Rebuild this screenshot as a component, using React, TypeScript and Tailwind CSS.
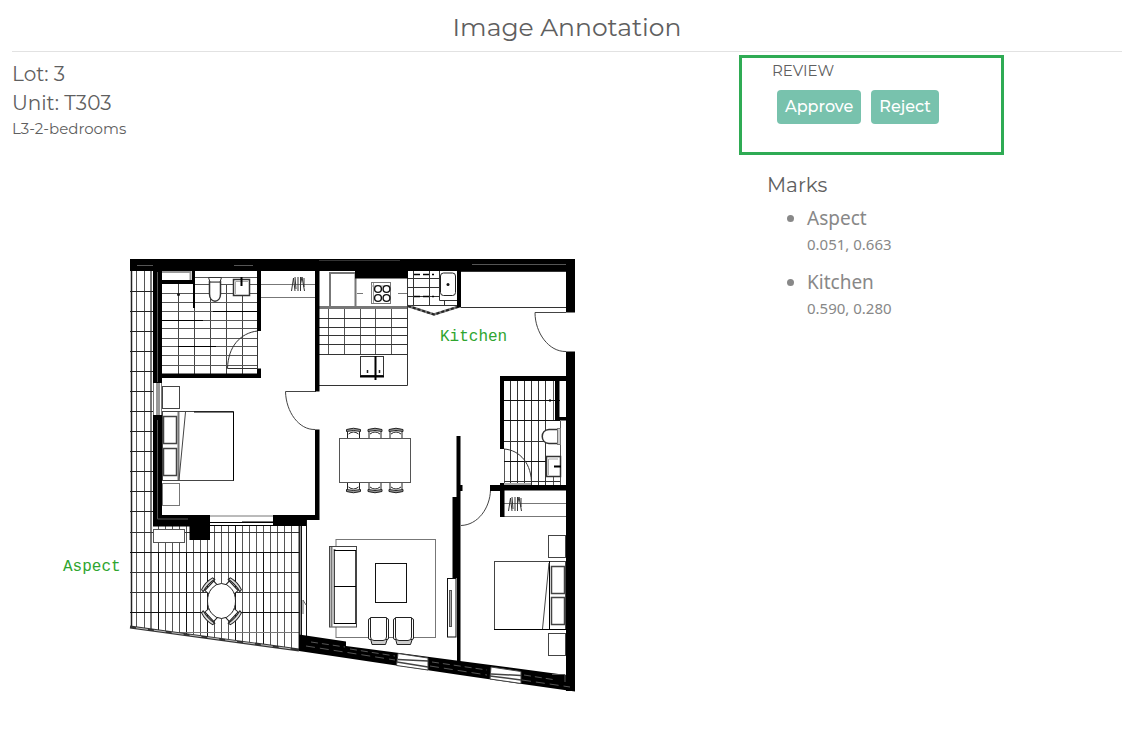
import React from "react";

type Mark = { name: string; at: string; x: number; y: number };

const marks: Mark[] = [
  { name: "Aspect", at: "0.051, 0.663", x: 63, y: 571 },
  { name: "Kitchen", at: "0.590, 0.280", x: 440, y: 341 },
];

const vertical = (xs: number[], top: number, bottom: number) =>
  xs.map((x) => `M${x} ${top}V${bottom}`).join("");
const horizontal = (ys: number[], left: number, right: number) =>
  ys.map((y) => `M${left} ${y}H${right}`).join("");

const deckEdge = (x: number) => 626 + ((x - 130) * 23) / 168;
const deckColumns = Array.from({ length: 20 }, (_, i) => 158.5 + i * 7);

function Chair({ x, y, turn }: { x: number; y: number; turn: number }) {
  return (
    <g transform={`translate(${x} ${y}) rotate(${turn})`} stroke="#222">
      <path d="M-6 5.5V-1.5M6 5.5V-1.5M-5 1Q0 -3 5 1" fill="none" />
      <path d="M-7 -1.5V-3.5Q0 -6 7 -3.5V-1.5Q0 -3.5 -7 -1.5Z" fill="#999" />
    </g>
  );
}

function DeckChair({ x, y, turn }: { x: number; y: number; turn: number }) {
  return (
    <g transform={`translate(${x} ${y}) rotate(${turn})`} stroke="#222" fill="#fff">
      <path d="M-6 7L-6.5 -1H6.500L6 7Z" />
      <path d="M-8.500 -1.500L-8 -4Q0 -6.500 8 -4L8.500 -1.500Q0 -3.500 -8.500 -1.500Z" fill="#ddd" />
    </g>
  );
}

function Armchair({ x }: { x: number }) {
  return (
    <g transform={`translate(${x} 617)`} fill="#fff" stroke="#222">
      <path d="M2.5 21.5L4 27.5H17.5L19.5 21.5Z" fill="#ccc" />
      <rect x="0.5" y="1.5" width="20" height="21" rx="1.5" />
      <path d="M2.5 0.5H18.500V20Q18.500 23.500 15 23.500H6Q2.500 23.500 2.500 20Z" />
    </g>
  );
}

function Hangers({ x, y }: { x: number; y: number }) {
  return (
    <path
      transform={`translate(${x} ${y})`}
      d="M0 14L2 1L3.500 14M3.500 0L4.500 12M6.500 0V14M9 14V0M9 7L10.500 0L13 14M12.500 1V10"
      stroke="#333"
      fill="none"
    />
  );
}

function FloorPlan() {
  return (
    <svg
      viewBox="12 140 727 570"
      className="block h-auto w-full"
      role="img"
      aria-label="Floor plan"
    >
      {/* Deck boards */}
      <g fill="none" stroke="#555" strokeWidth="1">
        <path d={vertical([136.5, 144.5], 271, 628)} />
        <path d="M151 271V629" stroke="#777" strokeWidth="2" />
        <path d="M131.5 260V627" stroke="#222" strokeWidth="1.5" />
        <path
          d={horizontal([291.5, 311.5, 331.5, 351.5, 371.5, 391.5, 411.5, 431.5, 451.5, 471.5, 491.5, 511.5], 130, 153)}
          stroke="#222"
        />
        <path d={deckColumns.map((x) => `M${x} 526V${deckEdge(x)}`).join("")} />
        <path d="M158.5 552V630M186.5 552V634M207.5 552V637M235.5 526V640M263.5 552V644" stroke="#111" />
        <path d={horizontal([532.5, 552.5, 572.5, 592.5, 612.5], 130, 299)} stroke="#333" />
        <path d="M130 552.5H299M130 612.5H299" stroke="#111" />
        <path d="M179 632.5H299" stroke="#777" />
        <path d="M130 627L299 650" stroke="#333" strokeWidth="3" />
        <path d="M136 627.8L296 649.5" stroke="#bbb" strokeWidth="1" strokeDasharray="12 6" />
        <path d="M301.5 526V645M306.5 520V637" stroke="#111" />
        <path d="M299.5 526V650" stroke="#222" strokeWidth="2" />
        <path d="M303 614V600L306 605" stroke="#666" />
      </g>
      <rect x="153.5" y="529.5" width="31" height="13" fill="#fff" stroke="#555" />

      {/* Deck table */}
      <DeckChair x={210} y={586.5} turn={-47} />
      <DeckChair x={233} y={586.5} turn={47} />
      <DeckChair x={210} y={616} turn={-133} />
      <DeckChair x={233} y={616} turn={133} />
      <ellipse cx="221.5" cy="601" rx="14" ry="17.5" fill="#fff" stroke="#222" />

      {/* Bathroom */}
      <g fill="none" stroke="#333">
        <path d={vertical([178.5, 194.5, 210.5, 226.5, 242.5], 284, 374)} stroke="#444" />
        <path d={horizontal([293.5, 302.5, 311.5, 320.5, 328.5, 338.5, 346.5, 355.5, 365.5], 162, 257)} stroke="#555" />
        <path d="M194 277.5H257M194 284.5H257" stroke="#555" />
        <path d="M213 311.5H257M162 320.5H203M178 346.5H216" stroke="#000" />
        <circle cx="178.5" cy="294.5" r="1.5" fill="#111" stroke="none" />
        <rect x="162" y="271" width="29" height="9" fill="#fff" stroke="none" />
        <path d="M162 272H190.5V280" stroke="#999" strokeWidth="2" />
        <path d="M257.5 331C240 333 228 347 227.5 368.5H257.5V331" />
        <path d="M209.500 281.5V294C209.5 303.5 220.5 303.5 220.5 294V281.5Z" fill="#fff" strokeWidth="1.5" />
        <path d="M208.5 277.5H221.5L220 282H210Z" fill="#fff" />
        <rect x="233.5" y="279.5" width="16" height="16" fill="#fff" strokeWidth="1.5" />
        <path d="M235.5 294V281.5H248" stroke="#aaa" />
        <path d="M241.5 277V286" stroke="#000" strokeWidth="2" />
      </g>

      {/* Wardrobes */}
      <g fill="none" stroke="#777">
        <path d="M261 284.5H315M261 297.5H315" />
        <path d="M504 503.5H566M504 516.5H566" />
        <Hangers x={291.5} y={277} />
        <Hangers x={508.5} y={497} />
      </g>

      {/* Kitchen */}
      <g fill="none" stroke="#333">
        <path d={vertical([328.5, 344.5, 360.5, 375.5, 391.5], 308, 354)} stroke="#555" />
        <path d={horizontal([318.5, 327.5, 335.5, 344.5, 354.5], 319, 407)} />
        <path d="M319 307.5H407" stroke="#777" strokeWidth="3" />
        <path d="M319 385.5H407.5V272" />
        <path d="M330 272V306M355.5 272V306M330 273H355" stroke="#777" strokeWidth="2" />
        <rect x="371.5" y="282.5" width="19" height="21" stroke="#777" />
        <path d="M373.5 283V303M371 286H390" stroke="#999" />
        <g stroke="#111" strokeWidth="1.4" fill="#fff">
          <circle cx="378" cy="289" r="3.4" />
          <circle cx="386.5" cy="289" r="3.4" />
          <circle cx="378" cy="298" r="3.4" />
          <circle cx="386.5" cy="298" r="3.4" />
        </g>
        <path d="M357 293.5H363M398 293.5H407" stroke="#777" />
        <rect x="360.5" y="356.5" width="23" height="19" fill="#fff" />
        <path d="M360 376.5H384" stroke="#000" strokeWidth="2" />
        <path d="M375.5 356V380" stroke="#000" strokeWidth="2" />
        <path d="M367.5 370V373M379.5 370V373" stroke="#222" strokeWidth="1.5" />
        <path d="M408 278.5H440M408 287.5H440M408 296.5H440M408 305.5H457" />
        <path d="M413.5 271V305M429.5 271V305" />
        <path d="M414 274.5H434M414 296.5H434" stroke="#000" strokeWidth="1.5" strokeDasharray="6 3" />
        <path d="M439.5 271V300.5H457M444.5 301V305" />
        <rect x="440.5" y="273" width="15" height="22.5" rx="3" fill="#fff" stroke="#222" />
        <circle cx="448" cy="284.500" r="1.5" fill="#111" stroke="none" />
        <path d="M408 306L434 314.5L459 306.5" stroke="#777" strokeWidth="2.5" />
        <path d="M408 306L434 314.5L459 306.5" stroke="#222" strokeWidth="2" strokeDasharray="3 2" />
        <path d="M461 307.5H566" />
      </g>

      {/* Ensuite */}
      <g fill="none" stroke="#333">
        <path d={vertical([510.5, 517.5, 524.5, 531.5, 538.5, 545.5], 381, 485)} />
        <path d="M553.5 381V420M553.5 477V485M560.5 421V485M504.5 449V485" stroke="#555" />
        <path d={horizontal([400.5, 420.5, 461.5], 504, 560)} stroke="#111" />
        <path d="M504 441.5H545M504 481.5H560" />
        <path d="M504 484H531" stroke="#aaa" strokeWidth="2" />
        <path d="M504 449C520 450 532 464 531.5 485" />
        <path d="M558.5 429.5H549C540 430 540 443 549 443.5H558.5Z" fill="#fff" strokeWidth="1.5" />
        <rect x="557.5" y="428.5" width="3" height="16" fill="#ccc" stroke="#777" />
        <rect x="546.5" y="456.5" width="14" height="20" fill="#fff" strokeWidth="1.5" />
        <path d="M548.5 475V459H558" stroke="#aaa" />
        <path d="M554 466.5H561" stroke="#000" strokeWidth="2" />
        <path d="M550 399V402" stroke="#000" />
      </g>

      {/* Doors */}
      <g fill="none" stroke="#444">
        <path d="M566 312.5H535C535 333 549 352 566 351.5" />
        <path d="M316 391.5H285.5C286 412 299 430 315 429.5" />
        <path d="M490.5 490C490 508 478 525 461 525.5" />
      </g>

      {/* Walls */}
      <g fill="#000">
        <path d="M130 259H575V312.5H566V271H130Z" />
        <path d="M153 271H162V383H153ZM153 415H162V515H210V540H189.5V526.5H153Z" />
        <path d="M162 280H192V271H195V308H193V284H162Z" />
        <path d="M257 271H261V331H257ZM257 368.5H261V378H162V373.5H257Z" />
        <path d="M315 271H319.5V391.5H315ZM355 271H408V278.5H355ZM457 271H461V307.5H457Z" />
        <path d="M315 429.5H319.5V520H306V526H273V515H315Z" />
        <path d="M566 351.5H575V691H566Z" />
        <path d="M500 376H566V381H559.5V417H566V420.5H555V381H504V449H500Z" />
        <path d="M490 485H500V483H504V485H566V490.5H504.5V517H500V491H490Z" />
        <path d="M456.5 436H460.5V485H462.5V491H460.5V663H457V578H452.5V497H456.5Z" />
        <path d="M299 634.5L346 641.5V646L460 661L566 675H575V691.5L460 675L299 651Z" />
      </g>
      <g fill="none" stroke="#555">
        <path d="M137 265.5H153M234 265.5H253M472 264.5H566M157.5 272V382M157.5 420V519H188" />
        <path d="M319 260.5H400M461 271.5H566" stroke="#333" />
        <path d="M311 642L345 647M350 649L395 656M432 662L487 670M524 675L556 680" strokeDasharray="7 4" />
        <path d="M306 646L395 660M430 666L487 675M522 680L570 687" strokeDasharray="9 5" />
        <path d="M552 674.5H565V682" />
      </g>

      {/* Windows */}
      <g fill="#fff" stroke="#444">
        <rect x="153" y="383" width="9" height="32" stroke="none" />
        <path d="M153.5 383V415M161.5 383V415" stroke="#777" />
        <path d="M157 383V415M159 383V415" stroke="#333" />
        <rect x="210" y="515" width="63" height="11" stroke="none" />
        <path d="M210 516H273M242 521.5H273" stroke="#777" />
        <path d="M210 522.5H242M240 522.5H273M210 525.5H273" stroke="#000" />
        <path d="M398 653.5L428 658V670L396.5 665.5Z" />
        <path d="M491 667L521 671.5V683.5L490 679Z" />
        <path d="M398 659.5L428 661M397 662L428 667M491 674L521 675.5M490 676L521 680" strokeWidth="1.5" />
      </g>

      {/* Main bedroom */}
      <g fill="#fff" stroke="#444">
        <rect x="162.5" y="386.5" width="17" height="22" />
        <rect x="162.5" y="483.5" width="17" height="22" stroke="#777" />
        <rect x="162.5" y="411.5" width="71" height="69" />
        <path d="M233.5 412V480.5M194 412H233" stroke="#000" />
        <path d="M178.5 412V480" stroke="#777" strokeWidth="2" />
        <path d="M185.5 412L179 480" />
        <rect x="163.5" y="416.5" width="13" height="27" strokeWidth="1.5" />
        <rect x="163.5" y="448.5" width="13" height="27" strokeWidth="1.5" />
      </g>

      {/* Second bedroom */}
      <g fill="#fff" stroke="#444">
        <rect x="548.5" y="535.5" width="17" height="22" />
        <rect x="548.5" y="633.5" width="17" height="22" />
        <rect x="494.5" y="561.5" width="71" height="68" />
        <path d="M549.5 561V629.5M494 629.5H566" stroke="#000" />
        <path d="M549 563L542.5 629" />
        <rect x="551.5" y="566.5" width="13" height="27" strokeWidth="1.5" />
        <rect x="551.5" y="597.5" width="13" height="27" strokeWidth="1.5" />
      </g>

      {/* Dining */}
      {[353.5, 375, 396].map((x) => (
        <React.Fragment key={x}>
          <Chair x={x} y={433} turn={0} />
          <Chair x={x} y={488} turn={180} />
        </React.Fragment>
      ))}
      <rect x="339.5" y="438.5" width="71" height="44" fill="#fff" stroke="#555" />

      {/* Living room */}
      <g fill="none" stroke="#444">
        <rect x="336" y="539.5" width="99.5" height="98" stroke="#777" />
        <rect x="329.5" y="546.5" width="27" height="80.5" fill="#fff" />
        <path d="M331.5 547V627M334.5 549V624" stroke="#777" strokeWidth="2" />
        <rect x="334.5" y="550.5" width="21" height="36" fill="#fff" />
        <rect x="334.5" y="586.5" width="21" height="37" fill="#fff" />
        <path d="M334 550.5H356M334 586.5H356M334 623.5H356" stroke="#000" />
        <rect x="375.5" y="563.5" width="31" height="39" stroke="#111" />
        <rect x="447.5" y="578.5" width="8.5" height="58.5" fill="#fff" stroke="#111" />
        <rect x="449.5" y="590.5" width="2" height="36" stroke="#555" fill="#aaa" />
      </g>
      <Armchair x={368} />
      <Armchair x={393} />

      {marks.map((mark) => (
        <text
          key={mark.name}
          x={mark.x}
          y={mark.y}
          className="fill-[#2fa52f] font-['Courier_New','Liberation_Mono',monospace] text-base"
        >
          {mark.name}
        </text>
      ))}
    </svg>
  );
}

const buttonClass =
  "h-[34px] rounded bg-[#78c2ad] px-2 text-base font-medium text-white hover:bg-[#63b39d]";

export default function App() {
  return (
    <div className="min-h-screen bg-white pl-3 pr-[21px] font-['Montserrat',Inter,sans-serif] font-normal text-[#5f5f5f]">
      <header className="border-b border-[#e2e2e2] pt-2 pb-1">
        <h1 className="text-center text-[25px] leading-[39px]">Image Annotation</h1>
      </header>
      <main className="grid grid-cols-[727fr_383fr]">
        <section>
          <div className="pt-2">
            <h2 className="text-xl leading-[29px]">Lot: 3</h2>
            <h2 className="text-xl leading-[29px]">Unit: T303</h2>
            <p className="text-[15px] leading-[22px]">L3-2-bedrooms</p>
          </div>
          <FloorPlan />
        </section>
        <aside className="pt-[3px]">
          <section className="h-[100px] w-[265px] border-3 border-[#2fab54] pl-[30px]">
            <h2 className="pt-0.5 text-[15px] leading-[22px]">REVIEW</h2>
            <div className="mt-2 flex gap-2.5 pl-[5px]">
              <button type="button" className={buttonClass}>Approve</button>
              <button type="button" className={buttonClass}>Reject</button>
            </div>
          </section>
          <section className="pt-4 pl-7">
            <h2 className="text-xl leading-7">Marks</h2>
            <ul className="list-disc pt-px pl-10 font-['Noto_Sans',sans-serif] font-normal text-[#888]">
              {marks.map((mark) => (
                <li key={mark.name} className="pt-1 pb-2 text-[19px] leading-7">
                  {mark.name}
                  <div className="text-[15px] leading-6">{mark.at}</div>
                </li>
              ))}
            </ul>
          </section>
        </aside>
      </main>
    </div>
  );
}
